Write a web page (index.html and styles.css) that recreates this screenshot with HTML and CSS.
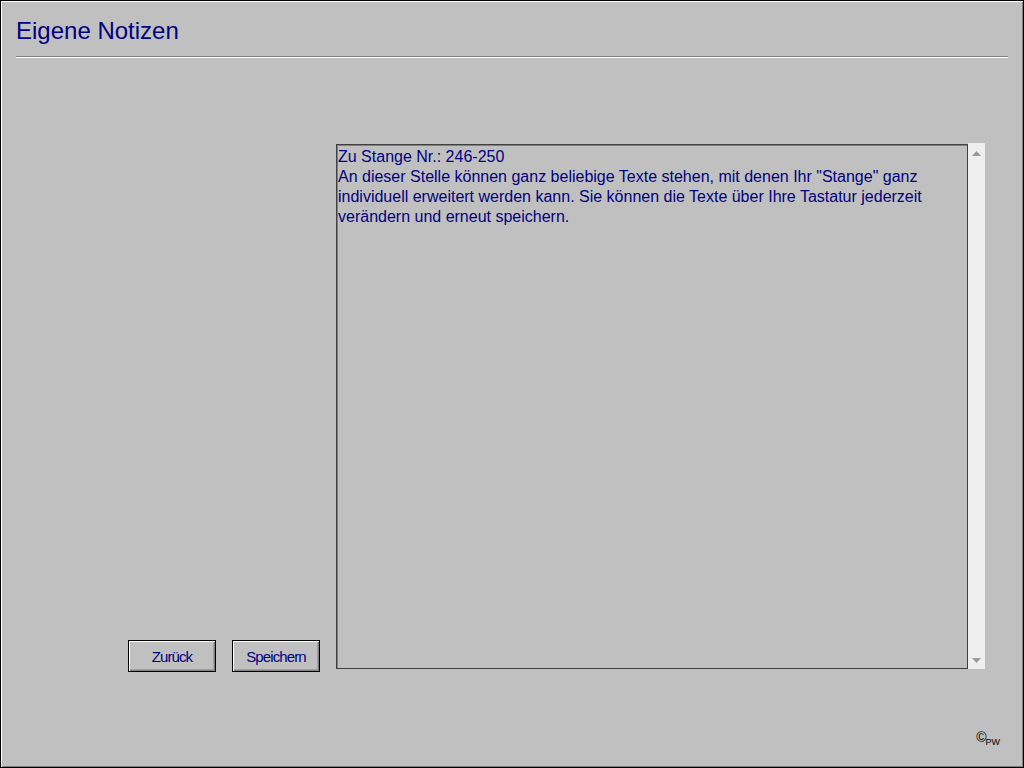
FILE: index.html
```html
<!DOCTYPE html>
<html lang="de">
<head>
    <meta charset="UTF-8">
    <meta name="viewport" content="width=device-width, initial-scale=1.0">
    <title>Eigene Notizen</title>
    <link rel="stylesheet" href="styles.css">
</head>
<body>

    <div class="window">

        <!-- Header -->
        <div class="header">
            <h1 class="title">Eigene Notizen</h1>
            <div class="separator"></div>
        </div>

        <!-- Notes area -->
        <div class="main">
            <div class="actions">
                <button class="btn">Zurück</button>
                <button class="btn">Speichern</button>
            </div>

            <div class="notes">
                <div class="notes-text">Zu Stange Nr.: 246-250<br>An dieser Stelle können ganz beliebige Texte stehen, mit denen Ihr "Stange" ganz individuell erweitert werden kann. Sie können die Texte über Ihre Tastatur jederzeit verändern und erneut speichern.</div>
                <div class="scrollbar">
                    <svg width="9" height="5" viewBox="0 0 9 5"><path d="M4.5 0 L9 5 L0 5 Z" fill="#9a9a9a"/></svg>
                    <svg width="9" height="5" viewBox="0 0 9 5"><path d="M0 0 L9 0 L4.5 5 Z" fill="#9a9a9a"/></svg>
                </div>
            </div>
        </div>

        <!-- Footer -->
        <div class="footer">
            <span class="copy">©</span><span class="initials">PW</span>
        </div>

    </div>

</body>
</html>
```

FILE: styles.css
```css
/* General */
body {
    margin: 0;
    background: #c0c0c0;
    font-family: "Liberation Sans", Arial, sans-serif;
}

.window {
    width: 1024px;
    height: 768px;
    box-sizing: border-box;
    border: 1px solid #000;
    box-shadow: inset 1px 1px #fff, inset -1px -1px #808080;
    background: #c0c0c0;
    display: flex;
    flex-direction: column;
    padding: 16px 15px 20px;
}

/* Header */
.title {
    margin: 0;
    font-size: 24px;
    line-height: 28px;
    font-weight: normal;
    color: #000080;
}

.separator {
    margin-top: 11px;
    border-top: 1px solid #808080;
    border-bottom: 1px solid #fff;
}

/* Main */
.main {
    display: flex;
    align-items: flex-end;
    gap: 16px;
    margin-top: 86px;
}

.actions {
    width: 304px;
    display: flex;
    justify-content: flex-end;
    gap: 16px;
}

.btn {
    width: 88px;
    height: 32px;
    padding: 0;
    border: 1px solid #000;
    background: #c0c0c0;
    box-shadow: inset 1px 1px #fff, inset -1px -1px #808080, inset -2px -2px #a0a0a0;
    color: #000080;
    font-family: "Liberation Sans", Arial, sans-serif;
    font-size: 15px;
    letter-spacing: -0.9px;
}

.notes {
    display: flex;
    margin-bottom: 3px;
}

.notes-text {
    width: 632px;
    height: 525px;
    box-sizing: border-box;
    border: 1px solid #404040;
    box-shadow: inset 1px 1px #808080;
    padding: 2px 4px 0 1px;
    color: #000080;
    font-size: 16px;
    line-height: 20px;
}

.scrollbar {
    width: 17px;
    height: 526px;
    margin-top: -1px;
    background: #efefef;
    display: flex;
    flex-direction: column;
    justify-content: space-between;
    align-items: center;
    padding: 8px 0 6px;
    box-sizing: border-box;
}

/* Footer */
.footer {
    margin-top: auto;
    display: flex;
    justify-content: flex-end;
    padding-right: 8px;
    color: #000;
}

.copy {
    font-size: 14px;
    line-height: 14px;
}

.initials {
    font-size: 9px;
    line-height: 9px;
    margin-top: 8px;
    margin-left: -1px;
}
```
